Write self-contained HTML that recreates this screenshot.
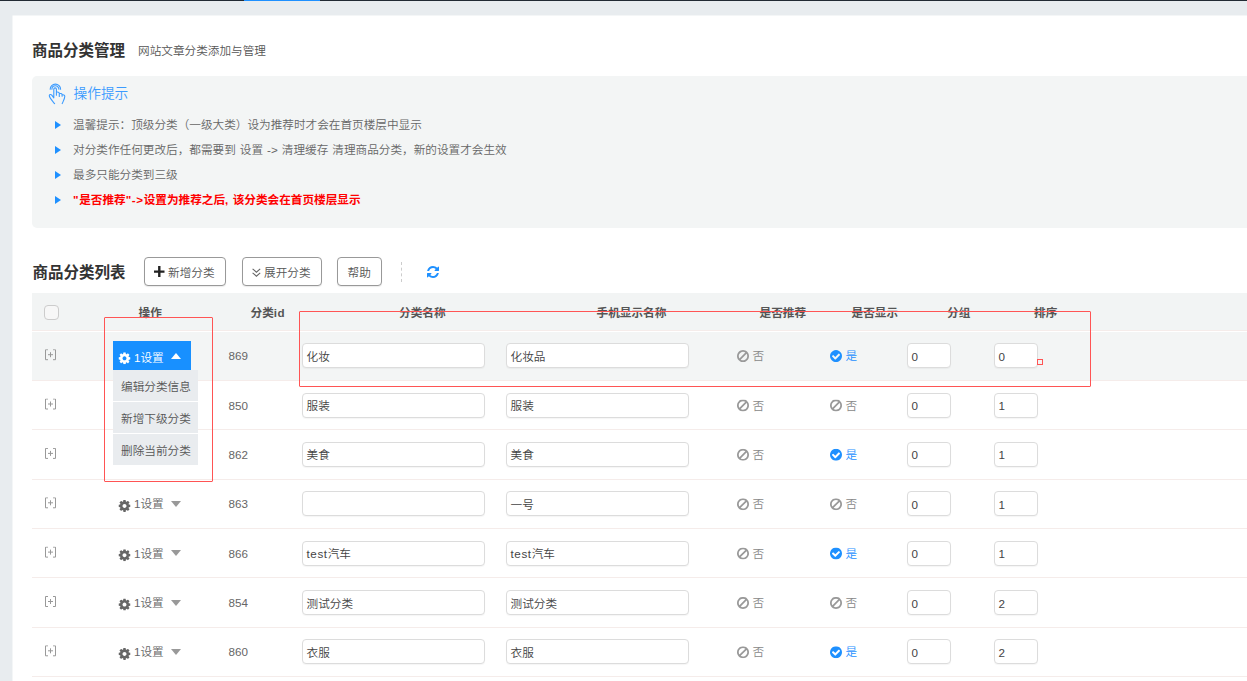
<!DOCTYPE html>
<html lang="zh-CN">
<head>
<meta charset="utf-8">
<title>商品分类管理</title>
<style>
*{box-sizing:border-box;margin:0;padding:0}
html,body{width:1247px;height:681px;overflow:hidden}
body{background:#e8ecef;font-family:"Liberation Sans","Noto Sans CJK SC",sans-serif;font-size:11.640px;font-weight:350;color:#555;position:relative}
.abs{position:absolute}
.topbar{left:0;top:0;width:1247px;height:1px;background:#222a33}
.topblue{left:244px;top:0;width:76px;height:1px;background:#1e90ff}
.panel{left:0;top:0;transform:translate(12.500px,15.500px);width:1240px;height:700px;background:#fff}
.title{left:32px;top:40px;font-size:15.500px;font-weight:700;color:#333;line-height:22px;white-space:nowrap}
.subtitle{left:138px;top:42px;font-size:11.640px;color:#555;line-height:18px;white-space:nowrap}
.tips{left:32px;top:75.500px;width:1230px;height:152.500px;background:#f3f5f5;border-radius:5px}
.tips-h{left:73.500px;top:83.500px;font-size:13.700px;color:#3b9bff;line-height:20px;white-space:nowrap}
.tip{left:73px;font-size:11.640px;color:#666;line-height:18px;white-space:nowrap}
.tip.red{color:#f00;font-weight:700}
.ls{letter-spacing:.6px}
.tri{left:55px;width:0;height:0;border-left:6px solid #1e90ff;border-top:4px solid transparent;border-bottom:4px solid transparent}
.h2{left:32.500px;top:262px;font-size:15.500px;font-weight:700;color:#333;line-height:22px;white-space:nowrap}
.btn{top:257px;height:28.500px;box-shadow:0 1px 1px rgba(0,0,0,.08);border:1px solid #999;border-radius:4px;background:#fff;font-size:11.640px;color:#555;line-height:27px;text-align:center;white-space:nowrap}
.btxt{top:263.500px;font-size:11.640px;color:#555;line-height:18px;white-space:nowrap}
.thead{left:32px;top:293px;width:1230px;height:38px;background:#f2f4f4;border-bottom:1px solid #f5ecea}
.th{top:303.700px;font-size:11.640px;font-weight:700;color:#555;line-height:18px;white-space:nowrap}
.row{left:32px;width:1230px;border-bottom:1px solid #f5ecea}
.cell{font-size:11.640px;color:#666;line-height:18px;white-space:nowrap}
.inp{height:25px;border:1px solid #dcdcdc;border-radius:4px;background:#fff;font-size:11.640px;color:#444;line-height:23px;padding-left:3.500px;padding-top:.5px;white-space:nowrap;box-shadow:0 1px 1px rgba(0,0,0,.04)}
.cb{left:44px;top:305px;width:15px;height:15px;border:1px solid #ccc;border-radius:4px;background:#f7f7f7}
.redbox{border:1px solid #ff5454;border-radius:1px}
.bluebtn{left:113px;top:341px;width:78px;height:29.500px;background:#1890ff}
.ditem{left:113px;width:85px;height:30.500px;background:#e9ecef;font-size:11.640px;color:#555;line-height:33px;padding-left:8px;white-space:nowrap}
.dtri{width:0;height:0;border-top:6px solid #999;border-left:5.500px solid transparent;border-right:5.500px solid transparent}
.utri{width:0;height:0;border-bottom:6px solid #fff;border-left:5.500px solid transparent;border-right:5.500px solid transparent}
</style>
</head>
<body>
<div class="abs topbar"></div>
<div class="abs topblue"></div>
<div class="abs panel"></div>
<div class="abs title">商品分类管理</div>
<div class="abs subtitle">网站文章分类添加与管理</div>
<div class="abs tips"></div>
<svg class="abs" style="left:44px;top:78.700px" width="28" height="28" viewBox="0 0 28 28" fill="none" stroke="#3b9bff" stroke-width="1.100" stroke-linecap="round" stroke-linejoin="round"><path d="M6.200 10.300A5.200 5.200 0 0 1 16.600 10.300M7.900 10.300A3.500 3.500 0 0 1 14.900 10.300"/><path d="M9.800 18.800V10.200A1.300 1.300 0 0 1 12.400 10.200V16.300M12.400 13.200C13.500 12.800 15.200 13.200 15.300 14.300V17.400M15.300 14.600C16.300 14.200 18 14.600 18.100 15.600V17.200M18.100 15.800C19.200 15.500 20.800 16 20.800 17.300C20.800 20 19 22.500 18.200 24.600M9.800 18.800L7.800 16.200C7 15.200 5.200 15.200 5.300 16.600C5.500 19 8.500 22 10.600 24.600"/></svg>
<div class="abs tips-h">操作提示</div>
<div class="abs tri" style="top:121px"></div>
<div class="abs tip" style="top:116px">温馨提示：顶级分类（一级大类）设为推荐时才会在首页楼层中显示</div>
<div class="abs tri" style="top:146px"></div>
<div class="abs tip" style="top:141px"><span style="word-spacing:.8px">对分类作任何更改后，都需要到 设置 -&gt; 清理缓存 清理商品分类，新的设置才会生效</span></div>
<div class="abs tri" style="top:171px"></div>
<div class="abs tip" style="top:166px">最多只能分类到三级</div>
<div class="abs tri" style="top:196px"></div>
<div class="abs tip red" style="top:191px"><span class="ls">"</span>是否推荐<span class="ls">"-&gt;</span>设置为推荐之后<span class="ls">, </span>该分类会在首页楼层显示</div>
<div class="abs h2">商品分类列表</div>
<div class="abs btn" style="left:144px;width:82px"></div>
<svg class="abs" style="left:154px;top:266px" width="11" height="11" viewBox="0 0 11 11"><path d="M5.300 0V11M0 5.600H10.500" stroke="#222" stroke-width="2.400" fill="none"/></svg>
<div class="abs btxt" style="left:168px">新增分类</div>
<div class="abs btn" style="left:242px;width:80px"></div>
<svg class="abs" style="left:252px;top:267.500px" width="9" height="10" viewBox="0 0 9 10"><path d="M0.600 0.800L4.400 4.200L8.200 0.800M0.600 4.800L4.400 8.200L8.200 4.800" stroke="#666" stroke-width="1.100" fill="none"/></svg>
<div class="abs btxt" style="left:264px">展开分类</div>
<div class="abs btn" style="left:337px;width:45px"></div>
<div class="abs btxt" style="left:347.500px">帮助</div>
<div class="abs thead"></div>
<div class="abs cb"></div>
<div class="abs th" style="left:138.500px">操作</div>
<div class="abs th" style="left:250.500px">分类<span style="letter-spacing:.4px">id</span></div>
<div class="abs th" style="left:399px">分类名称</div>
<div class="abs th" style="left:596.500px">手机显示名称</div>
<div class="abs th" style="left:759.500px">是否推荐</div>
<div class="abs th" style="left:851.500px">是否显示</div>
<div class="abs th" style="left:947px">分组</div>
<div class="abs th" style="left:1034px">排序</div>
<div class="abs" style="left:401px;top:262px;width:0;height:20px;border-left:1px dashed #ccc"></div>
<svg class="abs" style="left:427px;top:266px" width="12" height="12" viewBox="0 0 1536 1536"><path fill="#1e90ff" d="M1511 928q0 5-1 7-64 268-268 434.500t-478 166.500q-146 0-282.500-55t-243.500-157l-129 129q-19 19-45 19t-45-19-19-45v-448q0-26 19-45t45-19h448q26 0 45 19t19 45-19 45l-137 137q71 66 161 102t187 36q134 0 250-65t186-179q11-17 53-117 8-23 30-23h192q13 0 22.500 9.500t9.500 22.500zm25-800v448q0 26-19 45t-45 19h-448q-26 0-45-19t-19-45 19-45l138-138q-148-137-349-137-134 0-250 65t-186 179q-11 17-53 117-8 23-30 23h-199q-13 0-22.500-9.500t-9.500-22.500v-7q65-268 270-434.500t480-166.500q146 0 284 55.500t245 156.500l130-129q19-19 45-19t45 19 19 45z"/></svg>
<div class="abs" style="left:32px;width:1230px;top:332px;height:48px;background:#f3f5f5"></div>
<div class="abs" style="left:32px;width:1230px;top:380px;height:1px;background:#f5ecea"></div>
<svg class="abs" style="left:0;top:0;transform:translate(45px,349.2px)" width="12" height="12" viewBox="0 0 12 12" fill="none" stroke="#999" stroke-width="1"><path d="M3 0.500H0.500V10.500H3M8 0.500H10.500V10.500H8M3 5.500H8M5.500 3V8"/></svg>
<div class="abs cell" style="left:0;top:0;transform:translate(228.500px,347.28px)">869</div>
<div class="abs inp" style="left:302px;top:343.2px;width:183px">化妆</div>
<div class="abs inp" style="left:506px;top:343.2px;width:183px">化妆品</div>
<svg class="abs" style="left:0;top:0;transform:translate(737px,350.1px)" width="12" height="12" viewBox="0 0 1536 1536"><path fill="#999" d="M1312 768q0-161-87-295l-754 753q137 89 297 89 111 0 211.500-43.500t173.500-116.500 116-174.500 43-212.500zm-999 299l755-754q-135-91-300-91-148 0-273 73t-198 199-73 274q0 162 89 299zm1223-299q0 157-61 300t-163.500 246-245 164-298.500 61-298.500-61-245-164-163.500-246-61-300 61-299.500 163.500-245.500 245-164 298.500-61 298.500 61 245 164 163.500 245.500 61 299.500z"/></svg>
<div class="abs cell" style="left:0;top:0;transform:translate(752.500px,347.28px);color:#888">否</div>
<svg class="abs" style="left:0;top:0;transform:translate(830px,350.1px)" width="12" height="12" viewBox="0 0 1536 1536"><path fill="#1e90ff" d="M1284 606q0-28-18-46l-91-90q-19-19-45-19t-45 19l-408 407-226-226q-19-19-45-19t-45 19l-91 90q-18 18-18 46 0 27 18 45l362 362q19 19 45 19 27 0 46-19l543-543q18-18 18-45zm252 162q0 209-103 385.500t-279.500 279.500-385.500 103-385.500-103-279.500-279.500-103-385.500 103-385.500 279.500-279.500 385.500-103 385.500 103 279.500 279.500 103 385.500z"/></svg>
<div class="abs cell" style="left:0;top:0;transform:translate(845.500px,347.28px);color:#1e90ff">是</div>
<div class="abs inp" style="left:907px;top:343.2px;width:44px">0</div>
<div class="abs inp" style="left:994px;top:343.2px;width:44px">0</div>
<div class="abs" style="left:32px;width:1230px;top:429px;height:1px;background:#f5ecea"></div>
<svg class="abs" style="left:0;top:0;transform:translate(45px,398.5px)" width="12" height="12" viewBox="0 0 12 12" fill="none" stroke="#999" stroke-width="1"><path d="M3 0.500H0.500V10.500H3M8 0.500H10.500V10.500H8M3 5.500H8M5.500 3V8"/></svg>
<div class="abs cell" style="left:0;top:0;transform:translate(228.500px,396.64px)">850</div>
<div class="abs inp" style="left:302px;top:392.5px;width:183px">服装</div>
<div class="abs inp" style="left:506px;top:392.5px;width:183px">服装</div>
<svg class="abs" style="left:0;top:0;transform:translate(737px,399.4px)" width="12" height="12" viewBox="0 0 1536 1536"><path fill="#999" d="M1312 768q0-161-87-295l-754 753q137 89 297 89 111 0 211.500-43.500t173.500-116.500 116-174.500 43-212.500zm-999 299l755-754q-135-91-300-91-148 0-273 73t-198 199-73 274q0 162 89 299zm1223-299q0 157-61 300t-163.500 246-245 164-298.500 61-298.500-61-245-164-163.500-246-61-300 61-299.500 163.500-245.500 245-164 298.500-61 298.500 61 245 164 163.500 245.500 61 299.500z"/></svg>
<div class="abs cell" style="left:0;top:0;transform:translate(752.500px,396.64px);color:#888">否</div>
<svg class="abs" style="left:0;top:0;transform:translate(830px,399.4px)" width="12" height="12" viewBox="0 0 1536 1536"><path fill="#999" d="M1312 768q0-161-87-295l-754 753q137 89 297 89 111 0 211.500-43.500t173.500-116.500 116-174.500 43-212.500zm-999 299l755-754q-135-91-300-91-148 0-273 73t-198 199-73 274q0 162 89 299zm1223-299q0 157-61 300t-163.500 246-245 164-298.500 61-298.500-61-245-164-163.500-246-61-300 61-299.500 163.500-245.500 245-164 298.500-61 298.500 61 245 164 163.500 245.500 61 299.500z"/></svg>
<div class="abs cell" style="left:0;top:0;transform:translate(845.500px,396.64px);color:#888">否</div>
<div class="abs inp" style="left:907px;top:392.5px;width:44px">0</div>
<div class="abs inp" style="left:994px;top:392.5px;width:44px">1</div>
<div class="abs" style="left:32px;width:1230px;top:479px;height:1px;background:#f5ecea"></div>
<svg class="abs" style="left:0;top:0;transform:translate(45px,447.9px)" width="12" height="12" viewBox="0 0 12 12" fill="none" stroke="#999" stroke-width="1"><path d="M3 0.500H0.500V10.500H3M8 0.500H10.500V10.500H8M3 5.500H8M5.500 3V8"/></svg>
<div class="abs cell" style="left:0;top:0;transform:translate(228.500px,446.00px)">862</div>
<div class="abs inp" style="left:302px;top:441.9px;width:183px">美食</div>
<div class="abs inp" style="left:506px;top:441.9px;width:183px">美食</div>
<svg class="abs" style="left:0;top:0;transform:translate(737px,448.8px)" width="12" height="12" viewBox="0 0 1536 1536"><path fill="#999" d="M1312 768q0-161-87-295l-754 753q137 89 297 89 111 0 211.500-43.500t173.500-116.500 116-174.500 43-212.500zm-999 299l755-754q-135-91-300-91-148 0-273 73t-198 199-73 274q0 162 89 299zm1223-299q0 157-61 300t-163.500 246-245 164-298.500 61-298.500-61-245-164-163.500-246-61-300 61-299.500 163.500-245.500 245-164 298.500-61 298.500 61 245 164 163.500 245.500 61 299.500z"/></svg>
<div class="abs cell" style="left:0;top:0;transform:translate(752.500px,446.00px);color:#888">否</div>
<svg class="abs" style="left:0;top:0;transform:translate(830px,448.8px)" width="12" height="12" viewBox="0 0 1536 1536"><path fill="#1e90ff" d="M1284 606q0-28-18-46l-91-90q-19-19-45-19t-45 19l-408 407-226-226q-19-19-45-19t-45 19l-91 90q-18 18-18 46 0 27 18 45l362 362q19 19 45 19 27 0 46-19l543-543q18-18 18-45zm252 162q0 209-103 385.500t-279.500 279.500-385.500 103-385.500-103-279.500-279.500-103-385.500 103-385.500 279.500-279.500 385.500-103 385.500 103 279.500 279.500 103 385.500z"/></svg>
<div class="abs cell" style="left:0;top:0;transform:translate(845.500px,446.00px);color:#1e90ff">是</div>
<div class="abs inp" style="left:907px;top:441.9px;width:44px">0</div>
<div class="abs inp" style="left:994px;top:441.9px;width:44px">1</div>
<div class="abs" style="left:32px;width:1230px;top:528px;height:1px;background:#f5ecea"></div>
<svg class="abs" style="left:0;top:0;transform:translate(45px,497.3px)" width="12" height="12" viewBox="0 0 12 12" fill="none" stroke="#999" stroke-width="1"><path d="M3 0.500H0.500V10.500H3M8 0.500H10.500V10.500H8M3 5.500H8M5.500 3V8"/></svg>
<svg class="abs" style="left:0;top:0;transform:translate(118.5px,499.9px)" width="12" height="12" viewBox="0 0 1536 1536"><path fill="#666" d="M1024 768q0-106-75-181t-181-75-181 75-75 181 75 181 181 75 181-75 75-181zm512-109v222q0 12-8 23t-20 13l-185 28q-19 54-39 91 35 50 107 138 10 12 10 25t-9 23q-27 37-99 108t-94 71q-12 0-26-9l-138-108q-44 23-91 38-16 136-29 186-7 28-36 28h-222q-14 0-24.500-8.500t-11.500-21.500l-28-184q-49-16-90-37l-141 107q-10 9-25 9-14 0-25-11-126-114-165-168-7-10-7-23 0-12 8-23 15-21 51-66.500t54-70.500q-27-50-41-99l-183-27q-13-2-21-12.500t-8-23.500v-222q0-12 8-23t19-13l186-28q14-46 39-92-40-57-107-138-10-12-10-24 0-10 9-23 26-36 98.500-107.500t94.500-71.500q13 0 26 10l138 107q44-23 91-38 16-136 29-186 7-28 36-28h222q14 0 24.500 8.500t11.500 21.500l28 184q49 16 90 37l142-107q9-9 24-9 13 0 25 10 129 119 165 170 7 8 7 22 0 12-8 23-15 21-51 66.500t-54 70.500q26 50 41 98l183 28q13 2 21 12.500t8 23.500z"/></svg>
<div class="abs cell" style="left:0;top:0;transform:translate(134px,495.36px)">1设置</div>
<div class="abs dtri" style="left:171px;top:500.8px"></div>
<div class="abs cell" style="left:0;top:0;transform:translate(228.500px,495.36px)">863</div>
<div class="abs inp" style="left:302px;top:491.3px;width:183px"></div>
<div class="abs inp" style="left:506px;top:491.3px;width:183px">一号</div>
<svg class="abs" style="left:0;top:0;transform:translate(737px,498.2px)" width="12" height="12" viewBox="0 0 1536 1536"><path fill="#999" d="M1312 768q0-161-87-295l-754 753q137 89 297 89 111 0 211.500-43.500t173.500-116.500 116-174.500 43-212.500zm-999 299l755-754q-135-91-300-91-148 0-273 73t-198 199-73 274q0 162 89 299zm1223-299q0 157-61 300t-163.500 246-245 164-298.500 61-298.500-61-245-164-163.500-246-61-300 61-299.500 163.500-245.500 245-164 298.500-61 298.500 61 245 164 163.500 245.500 61 299.500z"/></svg>
<div class="abs cell" style="left:0;top:0;transform:translate(752.500px,495.36px);color:#888">否</div>
<svg class="abs" style="left:0;top:0;transform:translate(830px,498.2px)" width="12" height="12" viewBox="0 0 1536 1536"><path fill="#999" d="M1312 768q0-161-87-295l-754 753q137 89 297 89 111 0 211.500-43.500t173.500-116.500 116-174.500 43-212.500zm-999 299l755-754q-135-91-300-91-148 0-273 73t-198 199-73 274q0 162 89 299zm1223-299q0 157-61 300t-163.500 246-245 164-298.500 61-298.500-61-245-164-163.500-246-61-300 61-299.500 163.500-245.500 245-164 298.500-61 298.500 61 245 164 163.500 245.500 61 299.500z"/></svg>
<div class="abs cell" style="left:0;top:0;transform:translate(845.500px,495.36px);color:#888">否</div>
<div class="abs inp" style="left:907px;top:491.3px;width:44px">0</div>
<div class="abs inp" style="left:994px;top:491.3px;width:44px">1</div>
<div class="abs" style="left:32px;width:1230px;top:577px;height:1px;background:#f5ecea"></div>
<svg class="abs" style="left:0;top:0;transform:translate(45px,546.6px)" width="12" height="12" viewBox="0 0 12 12" fill="none" stroke="#999" stroke-width="1"><path d="M3 0.500H0.500V10.500H3M8 0.500H10.500V10.500H8M3 5.500H8M5.500 3V8"/></svg>
<svg class="abs" style="left:0;top:0;transform:translate(118.5px,549.2px)" width="12" height="12" viewBox="0 0 1536 1536"><path fill="#666" d="M1024 768q0-106-75-181t-181-75-181 75-75 181 75 181 181 75 181-75 75-181zm512-109v222q0 12-8 23t-20 13l-185 28q-19 54-39 91 35 50 107 138 10 12 10 25t-9 23q-27 37-99 108t-94 71q-12 0-26-9l-138-108q-44 23-91 38-16 136-29 186-7 28-36 28h-222q-14 0-24.500-8.500t-11.500-21.500l-28-184q-49-16-90-37l-141 107q-10 9-25 9-14 0-25-11-126-114-165-168-7-10-7-23 0-12 8-23 15-21 51-66.500t54-70.500q-27-50-41-99l-183-27q-13-2-21-12.500t-8-23.500v-222q0-12 8-23t19-13l186-28q14-46 39-92-40-57-107-138-10-12-10-24 0-10 9-23 26-36 98.500-107.500t94.500-71.500q13 0 26 10l138 107q44-23 91-38 16-136 29-186 7-28 36-28h222q14 0 24.500 8.500t11.500 21.500l28 184q49 16 90 37l142-107q9-9 24-9 13 0 25 10 129 119 165 170 7 8 7 22 0 12-8 23-15 21-51 66.500t-54 70.500q26 50 41 98l183 28q13 2 21 12.500t8 23.500z"/></svg>
<div class="abs cell" style="left:0;top:0;transform:translate(134px,544.72px)">1设置</div>
<div class="abs dtri" style="left:171px;top:550.1px"></div>
<div class="abs cell" style="left:0;top:0;transform:translate(228.500px,544.72px)">866</div>
<div class="abs inp" style="left:302px;top:540.6px;width:183px"><span class="ls">test</span>汽车</div>
<div class="abs inp" style="left:506px;top:540.6px;width:183px"><span class="ls">test</span>汽车</div>
<svg class="abs" style="left:0;top:0;transform:translate(737px,547.5px)" width="12" height="12" viewBox="0 0 1536 1536"><path fill="#999" d="M1312 768q0-161-87-295l-754 753q137 89 297 89 111 0 211.500-43.500t173.500-116.500 116-174.500 43-212.500zm-999 299l755-754q-135-91-300-91-148 0-273 73t-198 199-73 274q0 162 89 299zm1223-299q0 157-61 300t-163.500 246-245 164-298.500 61-298.500-61-245-164-163.500-246-61-300 61-299.500 163.500-245.500 245-164 298.500-61 298.500 61 245 164 163.500 245.500 61 299.500z"/></svg>
<div class="abs cell" style="left:0;top:0;transform:translate(752.500px,544.72px);color:#888">否</div>
<svg class="abs" style="left:0;top:0;transform:translate(830px,547.5px)" width="12" height="12" viewBox="0 0 1536 1536"><path fill="#1e90ff" d="M1284 606q0-28-18-46l-91-90q-19-19-45-19t-45 19l-408 407-226-226q-19-19-45-19t-45 19l-91 90q-18 18-18 46 0 27 18 45l362 362q19 19 45 19 27 0 46-19l543-543q18-18 18-45zm252 162q0 209-103 385.500t-279.500 279.500-385.500 103-385.500-103-279.500-279.500-103-385.500 103-385.500 279.500-279.500 385.500-103 385.500 103 279.500 279.500 103 385.500z"/></svg>
<div class="abs cell" style="left:0;top:0;transform:translate(845.500px,544.72px);color:#1e90ff">是</div>
<div class="abs inp" style="left:907px;top:540.6px;width:44px">0</div>
<div class="abs inp" style="left:994px;top:540.6px;width:44px">1</div>
<div class="abs" style="left:32px;width:1230px;top:627px;height:1px;background:#f5ecea"></div>
<svg class="abs" style="left:0;top:0;transform:translate(45px,596.0px)" width="12" height="12" viewBox="0 0 12 12" fill="none" stroke="#999" stroke-width="1"><path d="M3 0.500H0.500V10.500H3M8 0.500H10.500V10.500H8M3 5.500H8M5.500 3V8"/></svg>
<svg class="abs" style="left:0;top:0;transform:translate(118.5px,598.6px)" width="12" height="12" viewBox="0 0 1536 1536"><path fill="#666" d="M1024 768q0-106-75-181t-181-75-181 75-75 181 75 181 181 75 181-75 75-181zm512-109v222q0 12-8 23t-20 13l-185 28q-19 54-39 91 35 50 107 138 10 12 10 25t-9 23q-27 37-99 108t-94 71q-12 0-26-9l-138-108q-44 23-91 38-16 136-29 186-7 28-36 28h-222q-14 0-24.500-8.500t-11.500-21.500l-28-184q-49-16-90-37l-141 107q-10 9-25 9-14 0-25-11-126-114-165-168-7-10-7-23 0-12 8-23 15-21 51-66.500t54-70.500q-27-50-41-99l-183-27q-13-2-21-12.500t-8-23.500v-222q0-12 8-23t19-13l186-28q14-46 39-92-40-57-107-138-10-12-10-24 0-10 9-23 26-36 98.500-107.500t94.500-71.500q13 0 26 10l138 107q44-23 91-38 16-136 29-186 7-28 36-28h222q14 0 24.500 8.500t11.500 21.500l28 184q49 16 90 37l142-107q9-9 24-9 13 0 25 10 129 119 165 170 7 8 7 22 0 12-8 23-15 21-51 66.500t-54 70.500q26 50 41 98l183 28q13 2 21 12.500t8 23.500z"/></svg>
<div class="abs cell" style="left:0;top:0;transform:translate(134px,594.08px)">1设置</div>
<div class="abs dtri" style="left:171px;top:599.5px"></div>
<div class="abs cell" style="left:0;top:0;transform:translate(228.500px,594.08px)">854</div>
<div class="abs inp" style="left:302px;top:590.0px;width:183px">测试分类</div>
<div class="abs inp" style="left:506px;top:590.0px;width:183px">测试分类</div>
<svg class="abs" style="left:0;top:0;transform:translate(737px,596.9px)" width="12" height="12" viewBox="0 0 1536 1536"><path fill="#999" d="M1312 768q0-161-87-295l-754 753q137 89 297 89 111 0 211.500-43.500t173.500-116.500 116-174.500 43-212.500zm-999 299l755-754q-135-91-300-91-148 0-273 73t-198 199-73 274q0 162 89 299zm1223-299q0 157-61 300t-163.500 246-245 164-298.500 61-298.500-61-245-164-163.500-246-61-300 61-299.500 163.500-245.500 245-164 298.500-61 298.500 61 245 164 163.500 245.500 61 299.500z"/></svg>
<div class="abs cell" style="left:0;top:0;transform:translate(752.500px,594.08px);color:#888">否</div>
<svg class="abs" style="left:0;top:0;transform:translate(830px,596.9px)" width="12" height="12" viewBox="0 0 1536 1536"><path fill="#999" d="M1312 768q0-161-87-295l-754 753q137 89 297 89 111 0 211.500-43.500t173.500-116.500 116-174.500 43-212.500zm-999 299l755-754q-135-91-300-91-148 0-273 73t-198 199-73 274q0 162 89 299zm1223-299q0 157-61 300t-163.500 246-245 164-298.500 61-298.500-61-245-164-163.500-246-61-300 61-299.500 163.500-245.500 245-164 298.500-61 298.500 61 245 164 163.500 245.500 61 299.500z"/></svg>
<div class="abs cell" style="left:0;top:0;transform:translate(845.500px,594.08px);color:#888">否</div>
<div class="abs inp" style="left:907px;top:590.0px;width:44px">0</div>
<div class="abs inp" style="left:994px;top:590.0px;width:44px">2</div>
<div class="abs" style="left:32px;width:1230px;top:676px;height:1px;background:#f5ecea"></div>
<svg class="abs" style="left:0;top:0;transform:translate(45px,645.3px)" width="12" height="12" viewBox="0 0 12 12" fill="none" stroke="#999" stroke-width="1"><path d="M3 0.500H0.500V10.500H3M8 0.500H10.500V10.500H8M3 5.500H8M5.500 3V8"/></svg>
<svg class="abs" style="left:0;top:0;transform:translate(118.5px,647.9px)" width="12" height="12" viewBox="0 0 1536 1536"><path fill="#666" d="M1024 768q0-106-75-181t-181-75-181 75-75 181 75 181 181 75 181-75 75-181zm512-109v222q0 12-8 23t-20 13l-185 28q-19 54-39 91 35 50 107 138 10 12 10 25t-9 23q-27 37-99 108t-94 71q-12 0-26-9l-138-108q-44 23-91 38-16 136-29 186-7 28-36 28h-222q-14 0-24.500-8.500t-11.500-21.500l-28-184q-49-16-90-37l-141 107q-10 9-25 9-14 0-25-11-126-114-165-168-7-10-7-23 0-12 8-23 15-21 51-66.500t54-70.500q-27-50-41-99l-183-27q-13-2-21-12.500t-8-23.500v-222q0-12 8-23t19-13l186-28q14-46 39-92-40-57-107-138-10-12-10-24 0-10 9-23 26-36 98.500-107.500t94.500-71.500q13 0 26 10l138 107q44-23 91-38 16-136 29-186 7-28 36-28h222q14 0 24.500 8.500t11.500 21.500l28 184q49 16 90 37l142-107q9-9 24-9 13 0 25 10 129 119 165 170 7 8 7 22 0 12-8 23-15 21-51 66.500t-54 70.500q26 50 41 98l183 28q13 2 21 12.500t8 23.500z"/></svg>
<div class="abs cell" style="left:0;top:0;transform:translate(134px,643.44px)">1设置</div>
<div class="abs dtri" style="left:171px;top:648.8px"></div>
<div class="abs cell" style="left:0;top:0;transform:translate(228.500px,643.44px)">860</div>
<div class="abs inp" style="left:302px;top:639.3px;width:183px">衣服</div>
<div class="abs inp" style="left:506px;top:639.3px;width:183px">衣服</div>
<svg class="abs" style="left:0;top:0;transform:translate(737px,646.2px)" width="12" height="12" viewBox="0 0 1536 1536"><path fill="#999" d="M1312 768q0-161-87-295l-754 753q137 89 297 89 111 0 211.500-43.500t173.500-116.500 116-174.500 43-212.500zm-999 299l755-754q-135-91-300-91-148 0-273 73t-198 199-73 274q0 162 89 299zm1223-299q0 157-61 300t-163.500 246-245 164-298.500 61-298.500-61-245-164-163.500-246-61-300 61-299.500 163.500-245.500 245-164 298.500-61 298.500 61 245 164 163.500 245.500 61 299.500z"/></svg>
<div class="abs cell" style="left:0;top:0;transform:translate(752.500px,643.44px);color:#888">否</div>
<svg class="abs" style="left:0;top:0;transform:translate(830px,646.2px)" width="12" height="12" viewBox="0 0 1536 1536"><path fill="#1e90ff" d="M1284 606q0-28-18-46l-91-90q-19-19-45-19t-45 19l-408 407-226-226q-19-19-45-19t-45 19l-91 90q-18 18-18 46 0 27 18 45l362 362q19 19 45 19 27 0 46-19l543-543q18-18 18-45zm252 162q0 209-103 385.500t-279.500 279.500-385.500 103-385.500-103-279.500-279.500-103-385.500 103-385.500 279.500-279.500 385.500-103 385.500 103 279.500 279.500 103 385.500z"/></svg>
<div class="abs cell" style="left:0;top:0;transform:translate(845.500px,643.44px);color:#1e90ff">是</div>
<div class="abs inp" style="left:907px;top:639.3px;width:44px">0</div>
<div class="abs inp" style="left:994px;top:639.3px;width:44px">2</div>
<div class="abs bluebtn"></div>
<svg class="abs" style="left:0;top:0;transform:translate(118.5px,352.3px)" width="12" height="12" viewBox="0 0 1536 1536"><path fill="#fff" d="M1024 768q0-106-75-181t-181-75-181 75-75 181 75 181 181 75 181-75 75-181zm512-109v222q0 12-8 23t-20 13l-185 28q-19 54-39 91 35 50 107 138 10 12 10 25t-9 23q-27 37-99 108t-94 71q-12 0-26-9l-138-108q-44 23-91 38-16 136-29 186-7 28-36 28h-222q-14 0-24.500-8.500t-11.500-21.500l-28-184q-49-16-90-37l-141 107q-10 9-25 9-14 0-25-11-126-114-165-168-7-10-7-23 0-12 8-23 15-21 51-66.500t54-70.500q-27-50-41-99l-183-27q-13-2-21-12.500t-8-23.500v-222q0-12 8-23t19-13l186-28q14-46 39-92-40-57-107-138-10-12-10-24 0-10 9-23 26-36 98.500-107.500t94.500-71.500q13 0 26 10l138 107q44-23 91-38 16-136 29-186 7-28 36-28h222q14 0 24.500 8.500t11.500 21.500l28 184q49 16 90 37l142-107q9-9 24-9 13 0 25 10 129 119 165 170 7 8 7 22 0 12-8 23-15 21-51 66.500t-54 70.500q26 50 41 98l183 28q13 2 21 12.500t8 23.500z"/></svg>
<div class="abs cell" style="left:0;top:0;transform:translate(134px,348.78px);color:#fff">1设置</div>
<div class="abs utri" style="left:171px;top:353.2px"></div>
<div class="abs ditem" style="top:370.0px">编辑分类信息</div>
<div class="abs ditem" style="top:402.0px">新增下级分类</div>
<div class="abs ditem" style="top:434.0px">删除当前分类</div>
<div class="abs redbox" style="left:104px;top:317px;width:109px;height:164.500px"></div>
<div class="abs redbox" style="left:298.500px;top:311px;width:792.500px;height:76px"></div>
<div class="abs redbox" style="left:1037px;top:359px;width:6px;height:6px;border-radius:0"></div>
</body>
</html>
